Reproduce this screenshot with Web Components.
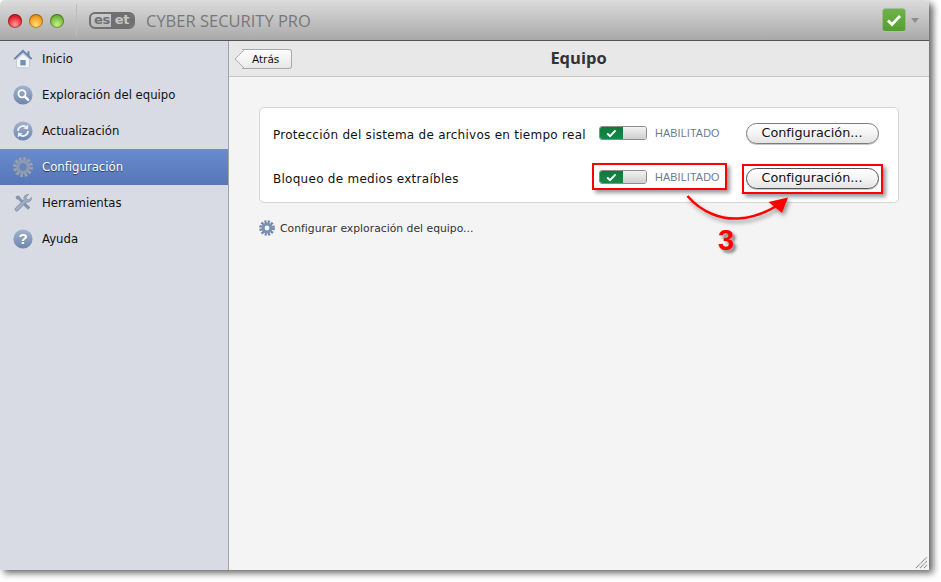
<!DOCTYPE html>
<html lang="es">
<head>
<meta charset="utf-8">
<title>ESET Cyber Security Pro</title>
<style>
  html, body { margin: 0; background: #fff; }
  body { font-family: "DejaVu Sans", sans-serif; width: 941px; height: 582px; overflow: hidden; }
</style>
</head>
<body>
<app-window>
  <title-bar slot="title"></title-bar>
  <side-nav slot="nav">
    <nav-item icon="home">Inicio</nav-item>
    <nav-item icon="scan">Exploración del equipo</nav-item>
    <nav-item icon="update">Actualización</nav-item>
    <nav-item icon="gear" selected>Configuración</nav-item>
    <nav-item icon="tools">Herramientas</nav-item>
    <nav-item icon="help">Ayuda</nav-item>
  </side-nav>
  <tool-bar slot="toolbar" back="Atrás">Equipo</tool-bar>
  <settings-card>
    <setting-row>Protección del sistema de archivos en tiempo real</setting-row>
    <setting-row strong>Bloqueo de medios extraíbles</setting-row>
  </settings-card>
  <gear-link>Configurar exploración del equipo...</gear-link>
</app-window>
<step-callout></step-callout>

<script>
const ICONS = {
  home: `<path d="M3.500 10.500 10 4.800l6.500 5.700v8.300h-13z" fill="#f3f4f7" stroke="#b6bfce" stroke-width=".7"/>
    <path d="M10 .6 .6 9.600l1.300 1.200L10 3.600l8.100 7.200 1.300-1.200-2.900-2.800V2.200h-2v2.700z" fill="#6a84ab"/>
    <rect x="7.300" y="11" width="5.400" height="5.400" fill="#7890b6"/>`,
  scan: `<circle cx="10" cy="10" r="9.600" fill="url(#disc)"/>
    <circle cx="9" cy="8.800" r="3.600" fill="none" stroke="#fff" stroke-width="1.800"/>
    <path d="m11.600 11.400 3.600 3.400" stroke="#fff" stroke-width="2.400" stroke-linecap="round"/>`,
  update: `<circle cx="10" cy="10" r="9.600" fill="url(#disc)"/>
    <path d="M5 10a5 5 0 0 1 8.200-3.800" fill="none" stroke="#eef1f6" stroke-width="1.800"/>
    <path d="m15.200 3.600-.2 4.800-4.600-.8z" fill="#eef1f6"/>
    <path d="M15 10a5 5 0 0 1-8.200 3.800" fill="none" stroke="#eef1f6" stroke-width="1.800"/>
    <path d="m4.800 16.400.2-4.800 4.600.8z" fill="#eef1f6"/>`,
  gear: `<circle cx="10" cy="10" r="8.200" fill="none" stroke="#98a1b2" stroke-width="3.600" stroke-dasharray="2.700 1.590"/>
    <circle cx="10" cy="10" r="5.200" fill="none" stroke="#8f99ab" stroke-width="3.600"/>
    <circle cx="10" cy="10" r="3.400" fill="#6584c0"/>`,
  tools: `<path d="M4 2.500 2.500 4l1 2.200 1.800.6 9.500 10 2.600-2.400-10-9.600-.5-1.600z" fill="#8796b0"/>
    <path d="M18.400 4.400a4 4 0 0 1-5 4.600L5.200 17.600a1.800 1.800 0 0 1-2.700-2.600L11 6.800a4 4 0 0 1 4.600-5.200L13 4.100l.6 2.200 2.300.6z" fill="#a3aec2" stroke="#6f7f9b" stroke-width=".6"/>`,
  help: `<circle cx="10" cy="10" r="9.600" fill="url(#disc)"/>
    <text x="10" y="15.400" text-anchor="middle" font-family="Liberation Sans, sans-serif" font-weight="700" font-size="15" fill="#fff">?</text>`
};

class AppWindow extends HTMLElement {
  constructor() {
    super();
    this.attachShadow({ mode: "open" });
    this.shadowRoot.innerHTML = `
      <style>
        :host {
          display: grid;
          grid-template-columns: 229px 1fr;
          grid-template-rows: 41px 36px 1fr;
          width: 929px;
          height: 570px;
          border-radius: 5px 5px 0 0;
          box-shadow: 4px 3px 7px rgba(0, 0, 0, .62);
          overflow: hidden;
        }
        ::slotted([slot="title"]) { grid-column: 1 / 3; }
        ::slotted([slot="nav"]) { grid-row: 2 / 4; }
        .content {
          position: relative;
          background: #f4f4f4;
          padding: 30px 30px 0;
          display: flex;
          flex-direction: column;
        }
        .grip { position: absolute; right: 1px; bottom: 1px; }
      </style>
      <slot name="title"></slot>
      <slot name="nav"></slot>
      <slot name="toolbar"></slot>
      <div class="content">
        <slot></slot>
        <svg class="grip" width="13" height="13" viewBox="0 0 13 13">
          <path d="M1 12 12 1M5 12l7-7M9 12l3-3" stroke="#8a8a8a" stroke-width="1.100" stroke-dasharray="1.200 .5"/>
        </svg>
      </div>`;
  }
}

class TitleBar extends HTMLElement {
  constructor() {
    super();
    this.attachShadow({ mode: "open" });
    this.shadowRoot.innerHTML = `
      <style>
        :host {
          display: flex;
          align-items: center;
          box-sizing: border-box;
          height: 41px;
          padding: 0 10px 0 8px;
          background: linear-gradient(#dcdcdc, #a9a9a9);
          border-bottom: 1px solid #555;
        }
        .lights { display: flex; gap: 7px; padding-top: 1px; }
        .light { width: 14px; height: 14px; border-radius: 50%; box-shadow: inset 0 0 0 1px rgba(0,0,0,.28); }
        .red { background: radial-gradient(circle at 50% 75%, #ff9a9a, #e3222c 60%, #a8101a); }
        .amber { background: radial-gradient(circle at 50% 75%, #ffe07a, #f09a1c 60%, #b96c0c); }
        .green { background: radial-gradient(circle at 50% 75%, #c8f08a, #71b83a 60%, #4a8a20); }
        .sep { width: 1px; height: 32px; margin: 0 12px 0 12px; background: #bdbdbd; }
        .logo {
          display: flex;
          align-items: stretch;
          box-sizing: border-box;
          width: 46px;
          height: 17px;
          margin: 1px 11px 0 0;
          border: 2px solid #707070;
          border-radius: 6px;
          font: 700 13px/12px "DejaVu Sans", sans-serif;
          letter-spacing: -.4px;
          color: #707070;
          overflow: hidden;
          padding-left: 3px;
        }
        .logo b { flex: 1; background: #707070; color: #c6c6c6; text-align: center; margin-left: 1px; }
        .name { padding-top: 2px; font: 400 16.5px/1 "Open Sans", sans-serif; color: #787878; flex: 1; white-space: nowrap; }
        .status {
          display: flex; align-items: center; justify-content: center;
          width: 22px; height: 22px;
          background: linear-gradient(#6db347, #52a031);
          border-radius: 2px;
          box-shadow: 0 0 0 .5px #7ea768, 0 1px 0 #ddd;
        }
        .caret { width: 0; height: 0; margin-left: 6px; border: 4px solid transparent; border-top: 5px solid #8d8d8d; border-bottom: 0; }
      </style>
      <div class="lights"><div class="light red"></div><div class="light amber"></div><div class="light green"></div></div>
      <div class="sep"></div>
      <div class="logo">es<b>et</b></div>
      <div class="name">CYBER SECURITY PRO</div>
      <div class="status">
        <svg width="16" height="14" viewBox="0 0 16 14"><path d="m2 7.500 4 4 8-8.500" fill="none" stroke="#fff" stroke-width="2.800"/></svg>
      </div>
      <div class="caret"></div>`;
  }
}

class SideNav extends HTMLElement {
  constructor() {
    super();
    this.attachShadow({ mode: "open" });
    this.shadowRoot.innerHTML = `
      <style>
        :host {
          display: flex;
          flex-direction: column;
          background: #d8dbe3;
          border-right: 1px solid #a3a3a3;
        }
      </style>
      <slot></slot>`;
  }
}

class NavItem extends HTMLElement {
  get icon() {
    return this.getAttribute("icon") || "home";
  }
  constructor() {
    super();
    this.attachShadow({ mode: "open" });
  }
  connectedCallback() {
    this.shadowRoot.innerHTML = `
      <style>
        :host {
          display: flex;
          align-items: center;
          gap: 9px;
          height: 36px;
          padding-left: 13px;
          font: 11.7px/1 "DejaVu Sans", sans-serif;
          color: #111;
        }
        :host([selected]) {
          background: linear-gradient(#6a8bcd, #5676b8);
          color: #fff;
          text-shadow: 0 1px 1px rgba(0, 0, 0, .55);
        }
        svg { flex: none; }
        span { padding-top: 2px; }
      </style>
      <svg width="20" height="20" viewBox="0 0 20 20">
        <defs>
          <linearGradient id="disc" x1="0" y1="0" x2="0" y2="1">
            <stop offset="0" stop-color="#a3b3cd"/>
            <stop offset="1" stop-color="#6e86ad"/>
          </linearGradient>
        </defs>
        ${ICONS[this.icon]}
      </svg>
      <span><slot></slot></span>`;
  }
}

class ToolBar extends HTMLElement {
  constructor() {
    super();
    this.attachShadow({ mode: "open" });
  }
  connectedCallback() {
    this.shadowRoot.innerHTML = `
      <style>
        :host {
          display: grid;
          grid-template-columns: 1fr auto 1fr;
          align-items: center;
          box-sizing: border-box;
          height: 36px;
          padding: 1px 0 0 6px;
          background: #e8e8e8;
          border-bottom: 1px solid #c6c6c6;
        }
        .back {
          justify-self: start;
          position: relative;
          box-sizing: border-box;
          height: 20px;
          width: 50px;
          margin-left: 7px;
          padding: 3px 0 0 10px;
          font: 10.5px/1.2 "DejaVu Sans", sans-serif;
          color: #111;
          background: linear-gradient(#fdfdfd, #e6e6e6);
          border: 1px solid #a9a9a9;
          border-left: 0;
          border-radius: 0 3px 3px 0;
        }
        .back::before {
          content: "";
          position: absolute;
          left: -5px;
          top: 2px;
          width: 13px;
          height: 13px;
          background: linear-gradient(135deg, #fdfdfd, #ececec);
          border-left: 1px solid #a9a9a9;
          border-bottom: 1px solid #a9a9a9;
          transform: rotate(45deg);
          border-radius: 0 0 0 2px;
        }
        .back span { position: relative; }
        h1 { margin: -1px 0 0 -7px; font: 700 16.5px/1 "Open Sans", sans-serif; color: #333; }
      </style>
      <div class="back"><span>${this.getAttribute("back")}</span></div>
      <h1><slot></slot></h1>
      <div></div>`;
  }
}

class SettingsCard extends HTMLElement {
  constructor() {
    super();
    this.attachShadow({ mode: "open" });
    this.shadowRoot.innerHTML = `
      <style>
        :host {
          display: flex;
          flex-direction: column;
          box-sizing: border-box;
          width: 640px;
          height: 96px;
          padding: 3px 0;
          background: #fff;
          border: 1px solid #d5d5d5;
          border-radius: 5px;
        }
      </style>
      <slot></slot>`;
  }
}

class ToggleSwitch extends HTMLElement {
  constructor() {
    super();
    this.attachShadow({ mode: "open" });
    this.shadowRoot.innerHTML = `
      <style>
        :host {
          display: flex;
          box-sizing: border-box;
          width: 48px;
          height: 14px;
          border: 1px solid #8c8c8c;
          border-radius: 3px;
          overflow: hidden;
        }
        .on {
          width: 23px;
          display: flex; align-items: center; justify-content: center;
          background: linear-gradient(#0d7a3a, #148a48);
        }
        .off { flex: 1; background: linear-gradient(#f3f3f3, #cfcfcf); }
      </style>
      <div class="on">
        <svg width="11" height="9" viewBox="0 0 11 9"><path d="m1.200 4.600 2.800 2.600 5.600-5.800" fill="none" stroke="#fff" stroke-width="2"/></svg>
      </div>
      <div class="off"></div>`;
  }
}

class PushButton extends HTMLElement {
  constructor() {
    super();
    this.attachShadow({ mode: "open" });
    this.shadowRoot.innerHTML = `
      <style>
        :host {
          display: flex;
          align-items: center;
          justify-content: center;
          box-sizing: border-box;
          width: 133px;
          height: 21px;
          padding: 1px 1px 0 0;
          font: 12.8px/1 "DejaVu Sans", sans-serif;
          color: #111;
          background: linear-gradient(#ffffff 0%, #f4f4f4 50%, #e4e4e4 100%);
          border: 1px solid #7c7c7c;
          border-radius: 11px;
          box-shadow: 0 1px 0 #c9c9c9;
        }
        :host([strong]) { border-color: #555; margin-top: 2px; }
      </style>
      <slot></slot>`;
  }
}

class SettingRow extends HTMLElement {
  constructor() {
    super();
    this.attachShadow({ mode: "open" });
  }
  connectedCallback() {
    const strong = this.hasAttribute("strong") ? "strong" : "";
    this.shadowRoot.innerHTML = `
      <style>
        :host {
          display: grid;
          grid-template-columns: 326px 48px 99px 133px;
          align-items: center;
          height: 44px;
          padding-left: 13px;
          font: 12px/1 "DejaVu Sans", sans-serif;
          color: #111;
          letter-spacing: .27px;
        }
        .state { padding-left: 8px; font: 10.8px/1 "Liberation Sans", sans-serif; letter-spacing: .12px; color: #6b7c90; }
        .name { white-space: nowrap; position: relative; top: 2px; }
        push-button { letter-spacing: 0; }
      </style>
      <span class="name"><slot></slot></span>
      <toggle-switch></toggle-switch>
      <span class="state">HABILITADO</span>
      <push-button ${strong}>Configuración...</push-button>`;
  }
}

class GearLink extends HTMLElement {
  constructor() {
    super();
    this.attachShadow({ mode: "open" });
    this.shadowRoot.innerHTML = `
      <style>
        :host {
          display: flex;
          align-items: center;
          gap: 5px;
          margin-top: 17px;
          font: 10.8px/1 "DejaVu Sans", sans-serif;
          color: #333;
        }
        span { position: relative; top: 1px; }
      </style>
      <svg width="16" height="16" viewBox="0 0 20 20">
        <circle cx="10" cy="10" r="8" fill="none" stroke="#6f86ad" stroke-width="3.600" stroke-dasharray="2.600 1.590"/>
        <circle cx="10" cy="10" r="5" fill="none" stroke="#7b90b3" stroke-width="4"/>
      </svg>
      <span><slot></slot></span>`;
  }
}

// tutorial markup painted over the screenshot: red boxes, arrow and step number
class StepCallout extends HTMLElement {
  constructor() {
    super();
    this.attachShadow({ mode: "open" });
    this.shadowRoot.innerHTML = `
      <style>
        :host { position: absolute; left: 0; top: 0; width: 941px; height: 582px; pointer-events: none; }
        .box { position: absolute; box-sizing: border-box; border: 2px solid #f00; box-shadow: 3px 3px 4px rgba(0, 0, 0, .4); }
        .a { left: 592px; top: 163px; width: 135px; height: 27px; }
        .b { left: 742px; top: 164px; width: 141px; height: 30px; }
        svg { position: absolute; left: 0; top: 0; }
        .num {
          position: absolute; left: 718px; top: 226px;
          font: 700 29px/1 "Liberation Sans", sans-serif;
          color: #f00;
          text-shadow: 3px 3px 3px rgba(0, 0, 0, .45);
        }
      </style>
      <div class="box a"></div>
      <div class="box b"></div>
      <svg width="941" height="582">
        <defs><filter id="soft" x="-20%" y="-20%" width="150%" height="160%"><feDropShadow dx="2" dy="3" stdDeviation="2" flood-color="#000" flood-opacity=".4"/></filter></defs>
        <g filter="url(#soft)">
          <path d="M687.500 196C702 213 722 219.500 738 218.500C754 217.500 767 212 778 205" fill="none" stroke="#f00" stroke-width="2.500"/>
          <path d="M788 197.500 768.500 202 782 213z" fill="#f00"/>
        </g>
      </svg>
      <div class="num">3</div>`;
  }
}

customElements.define("app-window", AppWindow);
customElements.define("title-bar", TitleBar);
customElements.define("side-nav", SideNav);
customElements.define("nav-item", NavItem);
customElements.define("tool-bar", ToolBar);
customElements.define("settings-card", SettingsCard);
customElements.define("toggle-switch", ToggleSwitch);
customElements.define("push-button", PushButton);
customElements.define("setting-row", SettingRow);
customElements.define("gear-link", GearLink);
customElements.define("step-callout", StepCallout);
</script>
</body>
</html>
